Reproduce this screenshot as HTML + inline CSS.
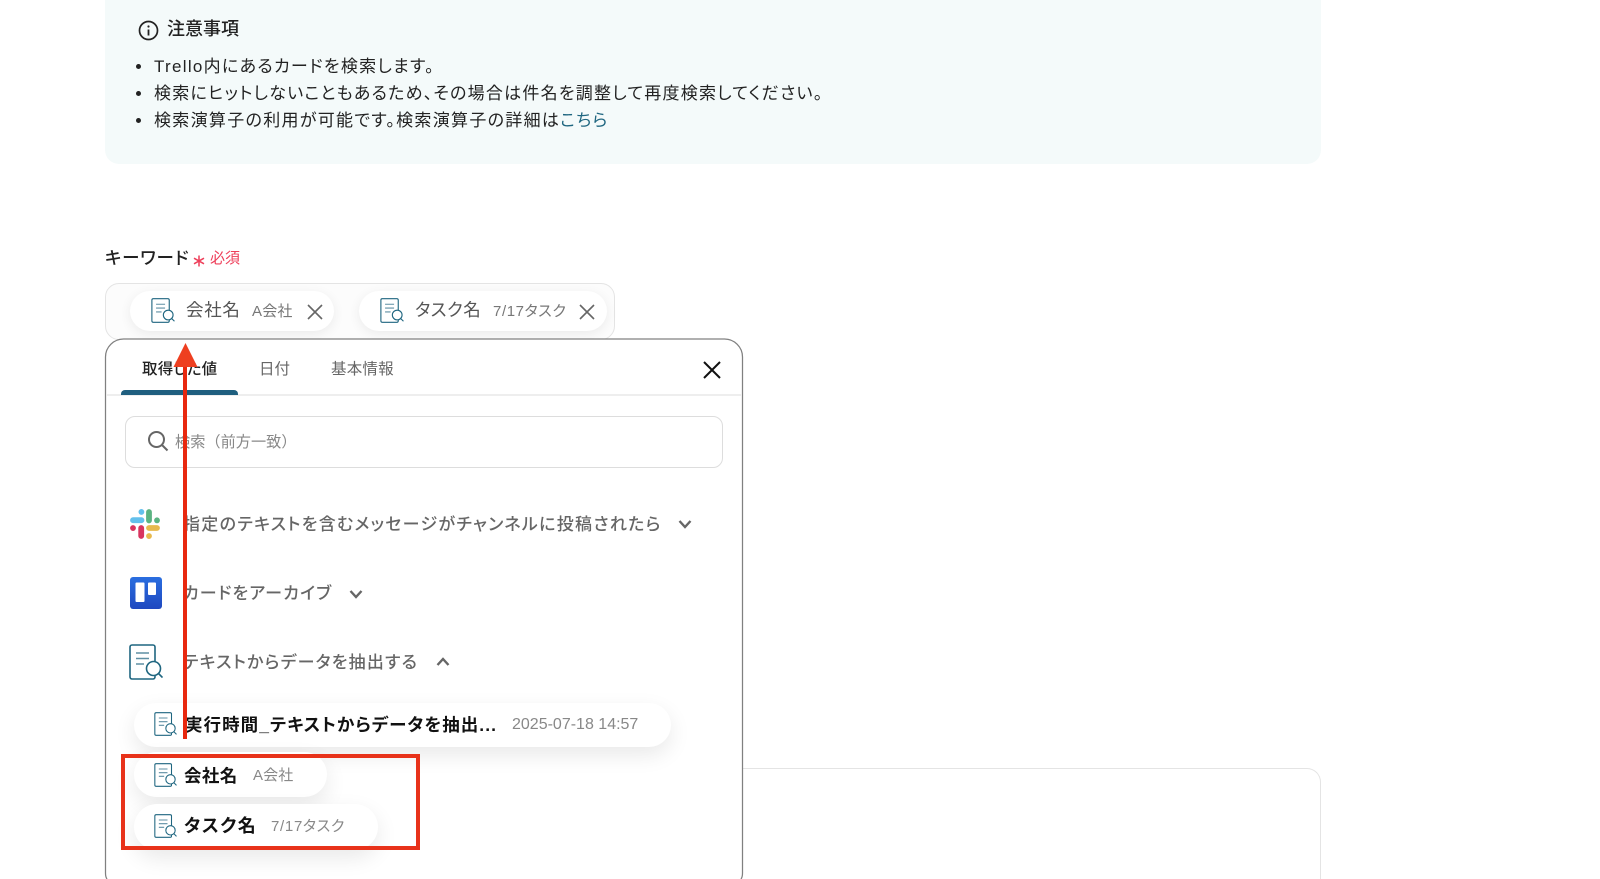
<!DOCTYPE html>
<html lang="ja"><head><meta charset="utf-8"><title>注意事項</title>
<style>
html,body{margin:0;padding:0;background:#fff;width:1600px;height:879px;overflow:hidden}
body{font-family:"Liberation Sans","Noto Sans CJK JP",sans-serif;font-feature-settings:"palt";color:#222}
#r{position:relative;width:1600px;height:879px;overflow:hidden}
.a{position:absolute;box-sizing:border-box}
.t{position:absolute;white-space:nowrap;line-height:24px;height:24px}
.chip{position:absolute;box-sizing:border-box;background:#fff;border-radius:24px;box-shadow:0 8px 22px rgba(0,0,0,.09)}
svg{position:absolute;overflow:visible}
</style></head><body><div id="r">
<svg width="0" height="0" style="position:absolute"><defs>
<symbol id="doc" viewBox="0 0 34 36"><rect x="1" y="1" width="25" height="34" rx="2" fill="none" stroke="#1f6680" stroke-width="1.6"/><path d="M7 9H20M7 14.500H20M7 20H15" stroke="#5f8fa3" stroke-width="1.6" fill="none"/><circle cx="24.500" cy="24.500" r="7" fill="#fff" stroke="#1f6680" stroke-width="1.6"/><path d="M29.500 29.500L33.500 33.500" stroke="#1f6680" stroke-width="1.6"/></symbol>
</defs></svg>

<div class="a" style="left:105px;top:0;width:1216px;height:163.5px;background:#f4fafa;border-radius:0 0 14px 14px"></div>
<svg style="left:138px;top:20px" width="21" height="21" viewBox="0 0 21 21"><circle cx="10.500" cy="10.500" r="9" fill="none" stroke="#222" stroke-width="1.7"/><path d="M10.500 9.500V15.500" stroke="#222" stroke-width="1.8"/><circle cx="10.500" cy="6.500" r="1.100" fill="#222"/></svg>
<div class="t" style="left:167px;top:17px;font-size:18px;font-weight:500;color:#222">注意事項</div>
<div class="a" style="left:136px;top:64px;width:5px;height:5px;border-radius:50%;background:#222"></div>
<div class="a" style="left:136px;top:91px;width:5px;height:5px;border-radius:50%;background:#222"></div>
<div class="a" style="left:136px;top:118px;width:5px;height:5px;border-radius:50%;background:#222"></div>
<div class="t" style="left:154px;top:55px;font-size:17px;letter-spacing:1.3px">Trello内にあるカードを検索します。</div>
<div class="t" style="left:154px;top:82px;font-size:17px;letter-spacing:1.24px">検索にヒットしないこともあるため、その場合は件名を調整して再度検索してください。</div>
<div class="t" style="left:154px;top:109px;font-size:17px;letter-spacing:1.3px">検索演算子の利用が可能です。検索演算子の詳細は<span style="color:#1f6680">こちら</span></div>

<div class="t" style="left:105px;top:246px;font-size:17.5px;font-weight:500;color:#222;letter-spacing:.8px">キーワード</div>
<svg style="left:193px;top:255px" width="12" height="12" viewBox="0 0 12 12"><path d="M6 0.500V11.500M1 3.200L11 8.800M11 3.200L1 8.800" stroke="#ee3f5a" stroke-width="1.5"/></svg>
<div class="t" style="left:210px;top:247px;font-size:15px;color:#ee3f5a">必須</div>

<div class="a" style="left:105px;top:283px;width:510px;height:56.5px;border:1px solid #e4e4e4;border-radius:14px;background:#fcfcfc"></div>
<div class="chip" style="left:130px;top:291px;width:204px;height:40px;box-shadow:0 3px 12px rgba(0,0,0,.07)"></div>
<svg style="left:151px;top:298px" width="24" height="25"><use href="#doc"/></svg>
<div class="t" style="left:186px;top:298px;font-size:17.5px;color:#555;letter-spacing:.7px">会社名</div>
<div class="t" style="left:252px;top:300px;font-size:15px;color:#777;letter-spacing:.2px">A会社</div>
<svg style="left:307px;top:304px" width="16" height="16" viewBox="0 0 16 16"><path d="M1 1L15 15M15 1L1 15" stroke="#666" stroke-width="1.6"/></svg>
<div class="chip" style="left:359px;top:291px;width:248px;height:40px;box-shadow:0 3px 12px rgba(0,0,0,.07)"></div>
<svg style="left:380px;top:298px" width="24" height="25"><use href="#doc"/></svg>
<div class="t" style="left:415px;top:298px;font-size:17.5px;color:#555;letter-spacing:.5px">タスク名</div>
<div class="t" style="left:493px;top:300px;font-size:15px;color:#777;letter-spacing:.6px">7/17タスク</div>
<svg style="left:579px;top:304px" width="16" height="16" viewBox="0 0 16 16"><path d="M1 1L15 15M15 1L1 15" stroke="#666" stroke-width="1.6"/></svg>

<div class="a" style="left:700px;top:768px;width:621px;height:111px;border:1px solid #e4e4e4;border-bottom:none;border-radius:14px 14px 0 0"></div>

<svg style="left:0;top:0" width="1600" height="879" viewBox="0 0 1600 879"><path d="M107 879Q105.500 877 105.500 873V357A18 18 0 0 1 123.500 339H724.500A18 18 0 0 1 742.500 357V873Q742.500 877 741 879" fill="#fff" stroke="#808080" stroke-width="1.25"/></svg>
<div class="a" style="left:106px;top:394px;width:636px;height:2px;background:#eee"></div>
<div class="a" style="left:121px;top:390px;width:117px;height:5px;background:#1f5f7f;border-radius:4px 4px 0 0"></div>
<div class="t" style="left:142px;top:358px;font-size:15.5px;font-weight:500;color:#222;letter-spacing:.2px">取得した値</div>
<div class="t" style="left:259px;top:358px;font-size:15.5px;color:#666">日付</div>
<div class="t" style="left:331px;top:358px;font-size:15.5px;color:#666;letter-spacing:.2px">基本情報</div>
<svg style="left:703px;top:361px" width="18" height="18" viewBox="0 0 18 18"><path d="M1 1L17 17M17 1L1 17" stroke="#111" stroke-width="2"/></svg>

<div class="a" style="left:125px;top:416px;width:598px;height:51.5px;border:1.5px solid #ddd;border-radius:10px"></div>
<svg style="left:147px;top:430px" width="22" height="22" viewBox="0 0 22 22"><circle cx="9.500" cy="9.500" r="7.500" fill="none" stroke="#666" stroke-width="2"/><path d="M15 15L20.500 20.500" stroke="#666" stroke-width="2"/></svg>
<div class="t" style="left:175px;top:431px;font-size:15.2px;color:#888;font-feature-settings:normal">検索（前方一致）</div>

<svg style="left:130px;top:509px" width="30" height="30" viewBox="0 0 30 30" fill="none" stroke-linecap="round" stroke-width="5.8">
<path d="M3 11.200H11.500M11.400 2.900V3" stroke="#63c0ec"/><path d="M19 3V11.500M27 11.300V11.400" stroke="#5bb381"/><path d="M19 19H27M19 27V27.100" stroke="#e7b94d"/><path d="M11.200 19V27M3 19V19.100" stroke="#d8345f"/></svg>
<div class="t" style="left:183px;top:513px;font-size:17px;font-weight:500;color:#666;letter-spacing:1.3px">指定のテキストを含むメッセージがチャンネルに投稿されたら</div>
<svg style="left:678px;top:519px" width="14" height="10" viewBox="0 0 14 10"><path d="M1.500 2L7 8L12.500 2" fill="none" stroke="#666" stroke-width="2.400"/></svg>

<svg style="left:130px;top:577px" width="32" height="32" viewBox="0 0 32 32"><defs><linearGradient id="g" x1="0" y1="0" x2="0" y2="1"><stop offset="0" stop-color="#2a6ee0"/><stop offset="1" stop-color="#1f48c0"/></linearGradient></defs><rect width="32" height="32" rx="3" fill="url(#g)"/><rect x="5.500" y="5.500" width="9" height="19.500" fill="#fff" rx="1"/><rect x="18" y="5.500" width="8" height="12.500" fill="#fff" rx="1"/></svg>
<div class="t" style="left:183px;top:582px;font-size:17px;font-weight:500;color:#666;letter-spacing:1.17px">カードをアーカイブ</div>
<svg style="left:349px;top:589px" width="14" height="10" viewBox="0 0 14 10"><path d="M1.500 2L7 8L12.500 2" fill="none" stroke="#666" stroke-width="2.400"/></svg>

<svg style="left:129px;top:644px" width="34" height="36"><use href="#doc"/></svg>
<div class="t" style="left:183px;top:651px;font-size:17px;font-weight:500;color:#666;letter-spacing:1.2px">テキストからデータを抽出する</div>
<svg style="left:436px;top:657px" width="14" height="10" viewBox="0 0 14 10"><path d="M1.500 8L7 2L12.500 8" fill="none" stroke="#666" stroke-width="2.400"/></svg>

<div class="chip" style="left:134px;top:703px;width:537px;height:44px"></div>
<svg style="left:154px;top:712px" width="23" height="24"><use href="#doc"/></svg>
<div class="t" style="left:185px;top:713px;font-size:17.5px;font-weight:700;color:#111;letter-spacing:1.05px">実行時間_テキストからデータを抽出...</div>
<div class="t" style="left:512px;top:713px;font-size:16px;color:#888">2025-07-18 14:57</div>

<div class="chip" style="left:134px;top:752px;width:193px;height:45px"></div>
<svg style="left:154px;top:763px" width="23" height="24"><use href="#doc"/></svg>
<div class="t" style="left:184px;top:764px;font-size:17.5px;font-weight:700;color:#111;letter-spacing:.35px">会社名</div>
<div class="t" style="left:253px;top:764px;font-size:15px;color:#888;letter-spacing:.1px">A会社</div>

<div class="chip" style="left:134px;top:804px;width:244px;height:46px"></div>
<svg style="left:154px;top:814px" width="23" height="24"><use href="#doc"/></svg>
<div class="t" style="left:184px;top:814px;font-size:18px;font-weight:700;color:#111;letter-spacing:1.4px">タスク名</div>
<div class="t" style="left:271px;top:815px;font-size:15px;color:#888;letter-spacing:.7px">7/17タスク</div>

<div class="a" style="left:120.5px;top:754px;width:299.5px;height:96px;border:4px solid #e8321a"></div>
<div class="a" style="left:183px;top:360px;width:4px;height:379px;background:#e8280f"></div>
<svg style="left:173px;top:343px" width="25" height="24" viewBox="0 0 25 24"><path d="M12.500 0L24.500 24H0.500Z" fill="#ee3f20"/></svg>
</div></body></html>
